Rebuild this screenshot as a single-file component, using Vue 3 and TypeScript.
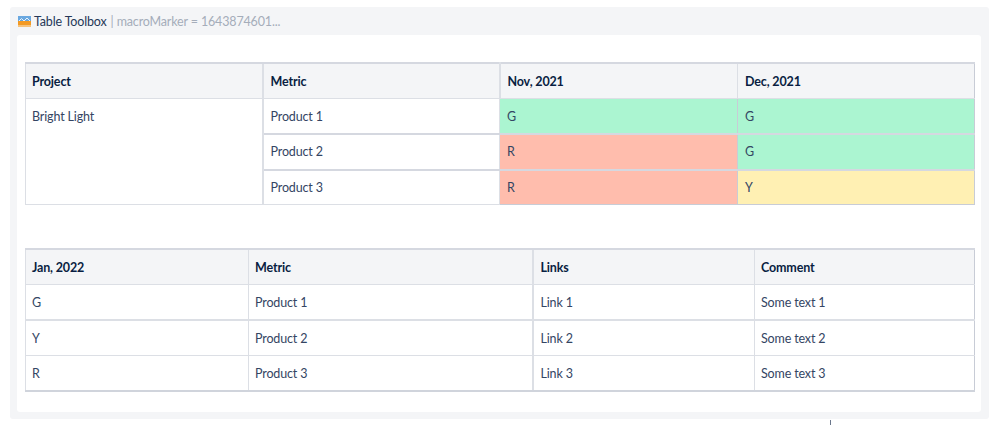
<script setup lang="ts">
interface Cell { text: string; tone?: string; rowspan?: number }
const first: Cell[][] = [
  [{ text: 'Bright Light', rowspan: 3 }, { text: 'Product 1' }, { text: 'G', tone: 'green' }, { text: 'G', tone: 'green' }],
  [{ text: 'Product 2' }, { text: 'R', tone: 'red' }, { text: 'G', tone: 'green' }],
  [{ text: 'Product 3' }, { text: 'R', tone: 'red' }, { text: 'Y', tone: 'yellow' }],
]
const second: string[][] = [
  ['G', 'Product 1', 'Link 1', 'Some text 1'],
  ['Y', 'Product 2', 'Link 2', 'Some text 2'],
  ['R', 'Product 3', 'Link 3', 'Some text 3'],
]
</script>

<template>
  <div class="page">
    <section class="macro">
      <header class="title">
        <svg class="icon" width="13" height="11" viewBox="0 0 13 11">
          <rect x="0" y="0" width="13" height="11" fill="#6aa8e0" />
          <rect x="0" y="5" width="13" height="6" fill="#f39a24" />
          <path d="M1 5 L3.5 2.5 L6 5 L9 2 L12 5" fill="none" stroke="#e8f2fb" stroke-width="1" />
          <rect x="0" y="9" width="13" height="2" fill="#f7c27a" />
        </svg>
        <span class="name">Table Toolbox</span>
        <span class="meta">| macroMarker = 1643874601...</span>
      </header>
      <div class="body">
        <table class="grid one">
          <colgroup>
            <col class="c237" /><col class="c237" /><col class="c238" /><col class="c237" />
          </colgroup>
          <thead>
            <tr><th>Project</th><th>Metric</th><th>Nov, 2021</th><th>Dec, 2021</th></tr>
          </thead>
          <tbody>
            <tr v-for="(row, r) in first" :key="r">
              <td v-for="(cell, c) in row" :key="c" :rowspan="cell.rowspan" :class="cell.tone">{{ cell.text }}</td>
            </tr>
          </tbody>
        </table>
        <table class="grid two">
          <colgroup>
            <col class="c223" /><col class="c284" /><col class="c222" /><col class="c220" />
          </colgroup>
          <thead>
            <tr><th>Jan, 2022</th><th>Metric</th><th>Links</th><th>Comment</th></tr>
          </thead>
          <tbody>
            <tr v-for="(row, r) in second" :key="r">
              <td v-for="(text, c) in row" :key="c">{{ text }}</td>
            </tr>
          </tbody>
        </table>
      </div>
    </section>
    <div class="tick"></div>
  </div>
</template>

<style>
html, body { margin: 0; background: #ffffff; }
</style>

<style scoped>
.page {
  position: relative;
  width: 999px;
  height: 425px;
  overflow: hidden;
  padding: 7px 10px 0;
  box-sizing: border-box;
  font-family: Lato, "Noto Sans", sans-serif;
  font-size: 12.5px;
  letter-spacing: -0.15px;
  color: #172b4d;
}
.macro {
  width: 979px;
  height: 412px;
  box-sizing: border-box;
  padding: 0 8px 7px 7px;
  background: #f4f5f7;
  border-radius: 3px;
  display: flex;
  flex-direction: column;
}
.title {
  height: 28px;
  display: flex;
  align-items: center;
  gap: 4px;
  white-space: nowrap;
}
.icon { flex: none; margin-left: 1px; margin-right: -1px; }
.name { color: #253858; }
.meta { color: #a5adba; }
.body {
  flex: 1;
  background: #ffffff;
  border-radius: 3px;
  padding: 27px 6px 0 8px;
  display: flex;
  flex-direction: column;
  gap: 43px;
}
.c237 { width: 237px; }
.c238 { width: 238px; }
.c223 { width: 223px; }
.c284 { width: 284px; }
.c222 { width: 222px; }
.c220 { width: 220px; }
.grid {
  border-collapse: collapse;
  table-layout: fixed;
  width: 949px;
}
.grid th, .grid td {
  height: 35.5px;
  padding: 0 6px;
  box-sizing: border-box;
  border: 1px solid #dcdfe5;
  text-align: left;
  font-weight: 400;
}
.one th:nth-child(n+2), .one td:not([rowspan]),
.two th:nth-child(3), .two td:nth-child(3) { padding-left: 7px; }
.grid th {
  background: #f4f5f7;
  font-weight: 700;
  color: #091e42;
  border-top: 2px solid #d5d8e0;
}
.grid td { color: #344563; }
.grid td[rowspan] { vertical-align: top; padding-top: 10px; }
.grid th:last-child, .grid td:last-child { border-right-color: #c8ccd6; }
.one th:nth-child(2), .one td[rowspan] { border-right: 2px solid #dcdfe5; }
.one th:nth-child(2) { border-left: 2px solid #dcdfe5; }
.one tbody tr:nth-child(n+2) td { border-top: 2px solid #d5d8e0; }
.one tbody tr:last-child td { height: 35px; }
.one tbody td.green, .one tbody td.red, .one tbody td.yellow { border-color: #c8ccd6; }
.two th:nth-child(3), .two td:nth-child(3) { border-left: 2px solid #dcdfe5; }
.two tbody tr:nth-child(2) td { border-top: 2px solid #dcdfe5; }
.two tbody tr:last-child td { border-bottom: 2px solid #d0d4dc; }
.green { background: #abf5d1; }
.red { background: #ffbdad; }
.yellow { background: #fff0b3; }
.tick {
  position: absolute;
  left: 830px;
  top: 420px;
  width: 1px;
  height: 5px;
  background: #6b778c;
}
</style>
